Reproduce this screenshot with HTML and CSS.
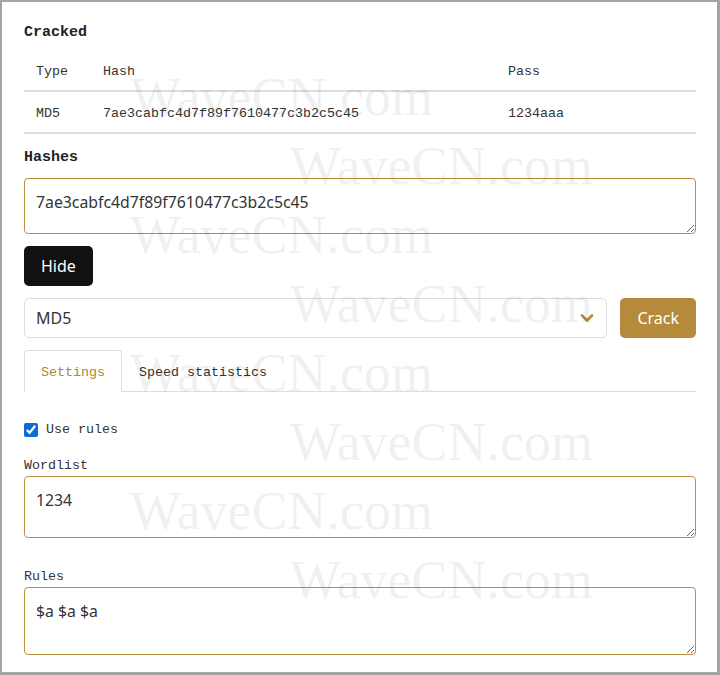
FILE: index.html
```html
<!DOCTYPE html>
<html lang="en">
<head>
<meta charset="utf-8">
<title>Cracker</title>
<link rel="stylesheet" href="styles.css">
</head>
<body>
<div class="frame">
  <h2 class="heading first">Cracked</h2>
  <div class="cracked" role="table">
    <div class="row head" role="row">
      <div class="cell" role="columnheader">Type</div>
      <div class="cell" role="columnheader">Hash</div>
      <div class="cell" role="columnheader">Pass</div>
    </div>
    <div class="row" role="row">
      <div class="cell" role="cell">MD5</div>
      <div class="cell" role="cell">7ae3cabfc4d7f89f7610477c3b2c5c45</div>
      <div class="cell" role="cell">1234aaa</div>
    </div>
  </div>

  <h2 class="heading hashes-title">Hashes</h2>
  <textarea class="field hashes">7ae3cabfc4d7f89f7610477c3b2c5c45</textarea>

  <button class="btn btn-dark">Hide</button>

  <div class="select-row">
    <div class="select-wrap">
      <select class="select"><option>MD5</option></select>
      <svg class="chevron" width="16" height="10" viewBox="0 0 16 10" aria-hidden="true">
        <path d="M3 2.5 L8 7.5 L13 2.5" fill="none" stroke="#b58b3b" stroke-width="2.6" stroke-linecap="round" stroke-linejoin="round"/>
      </svg>
    </div>
    <button class="btn btn-gold">Crack</button>
  </div>

  <div class="tabs">
    <div class="tab active">Settings</div>
    <div class="tab">Speed statistics</div>
  </div>

  <label class="check-row"><input type="checkbox" checked class="check"><span>Use rules</span></label>

  <label class="label wordlist-label">Wordlist</label>
  <textarea class="field wordlist">1234</textarea>

  <label class="label rules-label">Rules</label>
  <textarea class="field rules">$a $a $a</textarea>
</div>

<div class="watermarks" aria-hidden="true">
  <span class="wm wm1">WaveCN.com</span>
  <span class="wm wm2">WaveCN.com</span>
  <span class="wm wm3">WaveCN.com</span>
  <span class="wm wm4">WaveCN.com</span>
  <span class="wm wm5">WaveCN.com</span>
  <span class="wm wm6">WaveCN.com</span>
  <span class="wm wm7">WaveCN.com</span>
  <span class="wm wm8">WaveCN.com</span>
</div>
</body>
</html>
```

FILE: styles.css
```css
* { box-sizing: border-box; }

html, body {
  margin: 0;
  padding: 0;
  background: #ffffff;
  overflow: hidden;
}

.frame {
  width: 720px;
  height: 675px;
  border: 2px solid #a4a4a4;
  border-right-width: 3px;
  border-bottom-width: 3px;
  padding: 21px 21px 0 22px;
  display: flex;
  flex-direction: column;
  color: #333333;
  font-family: "Liberation Mono", "DejaVu Sans Mono", monospace;
  font-size: 13.33px;
}

.heading {
  margin: 0;
  font-family: "Liberation Mono", "DejaVu Sans Mono", monospace;
  font-size: 15px;
  font-weight: bold;
  line-height: 20px;
  color: #222222;
}

.hashes-title { margin-top: 14px; }

.cracked {
  margin-top: 7px;
  display: flex;
  flex-direction: column;
}

.row {
  display: grid;
  grid-template-columns: 67px 405px 1fr;
  height: 42px;
  border-bottom: 2px solid #dedede;
}

.cell {
  padding: 4px 12px 0 12px;
  display: flex;
  align-items: center;
  line-height: 20px;
  color: #333333;
  white-space: nowrap;
}

.field {
  display: block;
  width: 100%;
  margin: 0;
  border: 1px solid #b8913f;
  border-radius: 4px;
  padding: 11px 11px;
  font-family: "Noto Sans", "Open Sans", sans-serif;
  font-size: 15.8px;
  line-height: 24px;
  color: #333333;
  background: #ffffff;
  resize: vertical;
  outline: none;
}

.hashes { margin-top: 10px; height: 56px; }
.wordlist { margin-top: 0; height: 62px; }
.rules { margin-top: 0; height: 68px; }

.btn {
  height: 40px;
  padding: 0 17px;
  border: none;
  border-radius: 5px;
  font-family: "Noto Sans", "Open Sans", sans-serif;
  font-size: 16px;
  line-height: 40px;
  color: #ffffff;
  cursor: pointer;
}

.btn-dark {
  align-self: flex-start;
  margin-top: 12px;
  background: #111111;
}

.btn-gold {
  background: #b58a3a;
  flex: none;
}

.select-row {
  margin-top: 12px;
  display: flex;
  gap: 13px;
}

.select-wrap {
  position: relative;
  flex: 1;
}

.select {
  -webkit-appearance: none;
  appearance: none;
  display: block;
  width: 100%;
  height: 40px;
  border: 1px solid #dddddd;
  border-radius: 5px;
  padding: 0 11px;
  background: #ffffff;
  font-family: "Noto Sans", "Open Sans", sans-serif;
  font-size: 16px;
  color: #333333;
  outline: none;
}

.chevron {
  position: absolute;
  right: 12px;
  top: 15px;
  pointer-events: none;
}

.tabs {
  margin-top: 12px;
  display: flex;
  border-bottom: 1px solid #dedede;
}

.tab {
  padding: 12px 16px 9px 16px;
  line-height: 20px;
  border: 1px solid transparent;
  border-bottom: none;
  border-radius: 4px 4px 0 0;
  color: #333333;
  margin-bottom: -1px;
}

.tab.active {
  color: #a8863a;
  border-color: #dedede;
  background: #ffffff;
}

.check-row {
  margin-top: 28px;
  display: flex;
  align-items: center;
  gap: 8px;
  height: 20px;
  line-height: 20px;
}

.check {
  width: 14px;
  height: 14px;
  margin: 0;
  accent-color: #0b6bd6;
}

.label {
  display: block;
  line-height: 20px;
  color: #333333;
}

.wordlist-label { margin-top: 16px; }
.rules-label { margin-top: 29px; }

.watermarks {
  position: fixed;
  inset: 0;
  pointer-events: none;
}

.wm {
  position: absolute;
  font-family: "Liberation Serif", "Times New Roman", serif;
  font-size: 54px;
  line-height: 54px;
  color: rgba(0, 0, 0, 0.058);
  white-space: nowrap;
}

.wm1 { left: 130px; top: 70px; }
.wm2 { left: 290px; top: 139px; }
.wm3 { left: 130px; top: 208px; }
.wm4 { left: 290px; top: 277px; }
.wm5 { left: 130px; top: 346px; }
.wm6 { left: 290px; top: 415px; }
.wm7 { left: 130px; top: 484px; }
.wm8 { left: 290px; top: 553px; }
```
